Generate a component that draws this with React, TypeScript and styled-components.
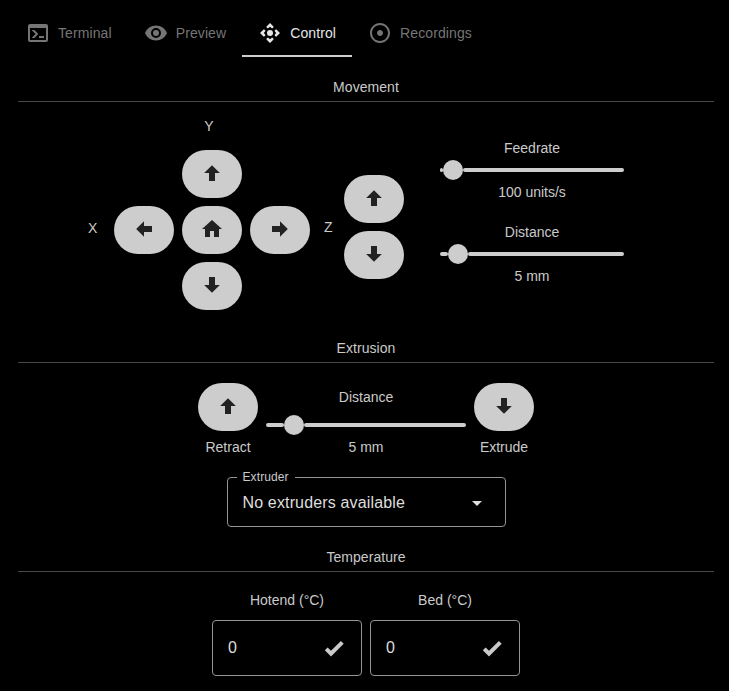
import React from "react";
import styled, { createGlobalStyle } from "styled-components";

const GlobalStyle = createGlobalStyle`
  * { box-sizing: border-box; }
  body {
    margin: 0;
    background: #000;
    color: #cacaca;
    font: 14px/20px "Liberation Sans", Arial, sans-serif;
  }
  button, input { font: inherit; letter-spacing: inherit; color: inherit; }
`;

const paths = {
  terminal:
    "M20,19V7H4V19H20M20,3A2,2 0 0,1 22,5V19A2,2 0 0,1 20,21H4A2,2 0 0,1 2,19V5C2,3.89 2.9,3 4,3H20M13,17V15H18V17H13M9.58,13L5.57,9H8.4L11.7,12.3C12.09,12.69 12.09,13.33 11.7,13.72L8.42,17H5.59L9.58,13Z",
  eye: "M12,9A3,3 0 0,0 9,12A3,3 0 0,0 12,15A3,3 0 0,0 15,12A3,3 0 0,0 12,9M12,17A5,5 0 0,1 7,12A5,5 0 0,1 12,7A5,5 0 0,1 17,12A5,5 0 0,1 12,17M12,4.5C7,4.5 2.73,7.61 1,12C2.73,16.39 7,19.5 12,19.5C17,19.5 21.27,16.39 23,12C21.27,7.61 17,4.5 12,4.5Z",
  control:
    "M12 2L15.5 5.5V6.3L14.6 7.3H13.8L12 5.8L10.2 7.3H9.4L8.5 6.3V5.5ZM22 12L18.5 15.5H17.7L16.7 14.6V13.8L18.2 12L16.7 10.2V9.4L17.7 8.5H18.5ZM12 22L8.5 18.5V17.7L9.4 16.7H10.2L12 18.2L13.8 16.7H14.6L15.5 17.7V18.5ZM2 12L5.5 8.5H6.3L7.3 9.4V10.2L5.8 12L7.3 13.8V14.6L6.3 15.5H5.5ZM15 12a3 3 0 1 1-6 0 3 3 0 0 1 6 0z",
  record:
    "M12 2C6.49 2 2 6.49 2 12s4.49 10 10 10 10-4.49 10-10S17.51 2 12 2zm0 18c-4.41 0-8-3.59-8-8s3.59-8 8-8 8 3.59 8 8-3.59 8-8 8zm3-8c0 1.66-1.34 3-3 3s-3-1.34-3-3 1.34-3 3-3 3 1.34 3 3z",
  up: "M15,20H9V12H4.16L12,4.16L19.84,12H15V20Z",
  down: "M9,4H15V12H19.84L12,19.84L4.16,12H9V4Z",
  left: "M20,9V15H12V19.84L4.16,12L12,4.16V9H20Z",
  right: "M4,15V9H12V4.16L19.84,12L12,19.84V15H4Z",
  home: "M10,20V14H14V20H19V12H22L12,3L2,12H5V20H10Z",
  check:
    "M9,20.42L2.79,14.21L5.62,11.38L9,14.77L18.88,4.88L21.71,7.71L9,20.42Z",
  caret: "M7,10L12,15L17,10H7Z",
};
type IconName = keyof typeof paths;

const Svg = styled.svg`
  display: block;
  flex: none;
  width: 24px;
  height: 24px;
  fill: currentColor;
`;
const Icon = ({ name }: { name: IconName }) => (
  <Svg viewBox="0 0 24 24" aria-hidden="true">
    <path d={paths[name]} />
  </Svg>
);

const Page = styled.div`
  height: 691px;
  padding: 9px 15px 0 18px;
  overflow: hidden;
`;

const TabBar = styled.nav`
  display: flex;
  margin-left: -8px;
  letter-spacing: 0.1px;
`;
const Tab = styled.button<{ $active: boolean }>`
  display: flex;
  align-items: center;
  gap: 8px;
  height: 48px;
  padding: 2px 16px 0;
  border: 0;
  border-bottom: 2px solid ${(p) => (p.$active ? "#cfcfcf" : "transparent")};
  background: none;
  color: ${(p) => (p.$active ? "#e6e6e6" : "#757575")};
`;

const SectionTitle = styled.h2<{ $top: number }>`
  margin: ${(p) => p.$top}px 0 0;
  padding-bottom: 4px;
  border-bottom: 1px solid #484848;
  font: inherit;
  letter-spacing: 0.05px;
  text-align: center;
`;

const MovementRow = styled.div`
  display: flex;
  height: 220px;
  padding-left: 70px;
`;
const AxisLabel = styled.span<{ $width: number; $top: number; $indent?: number }>`
  width: ${(p) => p.$width}px;
  margin-top: ${(p) => p.$top}px;
  padding-left: ${(p) => p.$indent ?? 0}px;
`;
const Pad = styled.div`
  display: grid;
  grid-template-columns: repeat(3, 60px);
  grid-template-rows: 26px repeat(3, 48px);
  gap: 8px;
  height: max-content;
  margin-top: 14px;
`;
const PadLabel = styled.span`
  grid-area: 1 / 2;
  width: 54px;
  text-align: center;
`;
const PadCell = styled.div<{ $row: number; $column: number }>`
  grid-area: ${(p) => p.$row} / ${(p) => p.$column};
`;
const JogButton = styled.button`
  display: flex;
  align-items: center;
  justify-content: center;
  width: 60px;
  height: 48px;
  padding: 0 0 2px;
  border: 0;
  border-radius: 24px;
  background: #cdcdcd;
  color: #222;
`;
const ZColumn = styled.div`
  display: flex;
  flex-direction: column;
  gap: 8px;
  margin-top: 73px;
`;
const SliderStack = styled.div`
  display: flex;
  flex-direction: column;
  gap: 20px;
  margin: 36px 0 0 36px;
`;
const SliderBox = styled.div<{ $width: number; $labelGap: number }>`
  display: flex;
  flex-direction: column;
  gap: 2px;
  width: ${(p) => p.$width}px;
  text-align: center;

  > :first-child {
    margin-bottom: ${(p) => p.$labelGap}px;
  }
`;
const SliderLine = styled.div`
  display: flex;
  align-items: center;
`;
const Track = styled.span`
  flex: 1;
  height: 4px;
  border-radius: 2px;
  background: #cdcdcd;
`;
const TrackBefore = styled(Track)`
  flex: none;
`;
const Thumb = styled.span`
  width: 20px;
  height: 20px;
  border-radius: 50%;
  background: #cdcdcd;
`;

interface SliderProps {
  label: string;
  value: string;
  width: number;
  offset: number;
  labelGap?: number;
}
const Slider = ({ label, value, width, offset, labelGap = 0 }: SliderProps) => (
  <SliderBox $width={width} $labelGap={labelGap}>
    <span>{label}</span>
    <SliderLine>
      <TrackBefore style={{ width: offset }} />
      <Thumb />
      <Track />
    </SliderLine>
    <span>{value}</span>
  </SliderBox>
);

const ExtrusionRow = styled.div`
  display: flex;
  justify-content: center;
  gap: 8px;
  margin-top: 20px;
`;
const LabelledButton = styled.div`
  display: flex;
  flex-direction: column;
  gap: 6px;
  text-align: center;
`;
const ExtrusionSlider = styled.div`
  padding-top: 4px;
`;

const Select = styled.fieldset`
  display: flex;
  align-items: center;
  justify-content: space-between;
  width: 279px;
  height: 58px;
  margin: 12px 0 0 209px;
  padding: 0 16px 6px 14.5px;
  border: 1px solid #949494;
  border-radius: 4px;
  font-size: 16px;
  line-height: 24px;
  letter-spacing: 0.15px;
  color: #dedede;
`;
const SelectLegend = styled.legend`
  margin-left: -6px;
  padding: 0 6px;
  font-size: 12px;
  line-height: 16px;
  letter-spacing: 0.1px;
  color: #cacaca;
`;
const SelectValue = styled.span`
  padding-top: 1px;
`;

const TemperatureRow = styled.div`
  display: flex;
  justify-content: center;
  gap: 8px;
  margin-top: 18px;
`;
const Heater = styled.label`
  display: flex;
  flex-direction: column;
  gap: 10px;
  width: 150px;
  text-align: center;
`;
const HeaterField = styled.span`
  display: flex;
  align-items: center;
  justify-content: space-between;
  height: 56px;
  padding: 0 15px;
  border: 1px solid #949494;
  border-radius: 4px;
  font-size: 16px;
`;
const HeaterInput = styled.input`
  width: 70px;
  padding: 0;
  border: 0;
  outline: 0;
  background: none;
  color: #dedede;
`;

const tabs: { icon: IconName; label: string }[] = [
  { icon: "terminal", label: "Terminal" },
  { icon: "eye", label: "Preview" },
  { icon: "control", label: "Control" },
  { icon: "record", label: "Recordings" },
];
const jogs: { icon: IconName; row: number; column: number; label: string }[] = [
  { icon: "up", row: 2, column: 2, label: "Y forward" },
  { icon: "left", row: 3, column: 1, label: "X left" },
  { icon: "home", row: 3, column: 2, label: "Home" },
  { icon: "right", row: 3, column: 3, label: "X right" },
  { icon: "down", row: 4, column: 2, label: "Y back" },
];

const Jog = ({ icon, label }: { icon: IconName; label: string }) => (
  <JogButton aria-label={label}>
    <Icon name={icon} />
  </JogButton>
);

export default function App() {
  return (
    <Page>
      <GlobalStyle />
      <TabBar>
        {tabs.map((t) => (
          <Tab key={t.label} $active={t.label === "Control"}>
            <Icon name={t.icon} />
            {t.label}
          </Tab>
        ))}
      </TabBar>

      <SectionTitle $top={20}>Movement</SectionTitle>
      <MovementRow>
        <AxisLabel $width={26} $top={116}>X</AxisLabel>
        <Pad>
          <PadLabel>Y</PadLabel>
          {jogs.map((j) => (
            <PadCell key={j.label} $row={j.row} $column={j.column}>
              <Jog icon={j.icon} label={j.label} />
            </PadCell>
          ))}
        </Pad>
        <AxisLabel $width={34} $top={115} $indent={14}>Z</AxisLabel>
        <ZColumn>
          <Jog icon="up" label="Z up" />
          <Jog icon="down" label="Z down" />
        </ZColumn>
        <SliderStack>
          <Slider label="Feedrate" value="100 units/s" width={184} offset={3} />
          <Slider label="Distance" value="5 mm" width={184} offset={8} />
        </SliderStack>
      </MovementRow>

      <SectionTitle $top={16}>Extrusion</SectionTitle>
      <ExtrusionRow>
        <LabelledButton>
          <Jog icon="up" label="Retract filament" />
          Retract
        </LabelledButton>
        <ExtrusionSlider>
          <Slider label="Distance" value="5 mm" width={200} offset={18} labelGap={6} />
        </ExtrusionSlider>
        <LabelledButton>
          <Jog icon="down" label="Extrude filament" />
          Extrude
        </LabelledButton>
      </ExtrusionRow>
      <Select>
        <SelectLegend>Extruder</SelectLegend>
        <SelectValue>No extruders available</SelectValue>
        <Icon name="caret" />
      </Select>

      <SectionTitle $top={20}>Temperature</SectionTitle>
      <TemperatureRow>
        {["Hotend (°C)", "Bed (°C)"].map((name) => (
          <Heater key={name}>
            {name}
            <HeaterField>
              <HeaterInput defaultValue="0" />
              <Icon name="check" />
            </HeaterField>
          </Heater>
        ))}
      </TemperatureRow>
    </Page>
  );
}
